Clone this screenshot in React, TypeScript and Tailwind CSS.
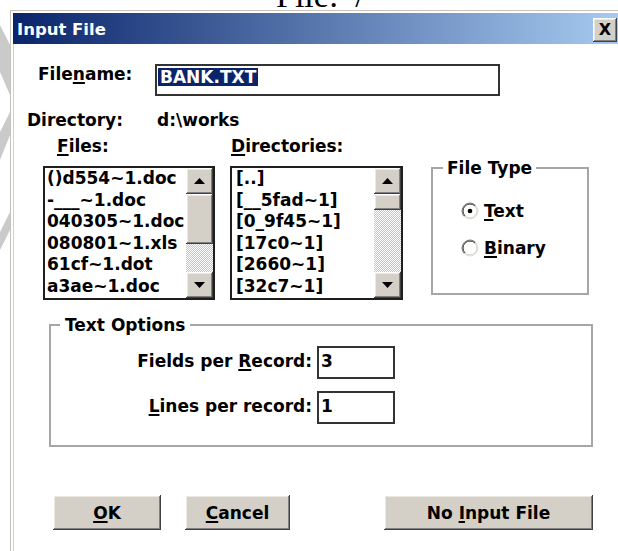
import React from 'react';

// classic raised 3D face used by buttons, scroll arrows and thumbs
const raised =
  'bg-[#d4d0c8] shadow-[inset_-1px_-1px_#404040,inset_1px_1px_#ffffff,inset_-2px_-2px_#808080,inset_2px_2px_#ece9e2]';

const files = ['()d554~1.doc', '-___~1.doc', '040305~1.doc', '080801~1.xls', '61cf~1.dot', 'a3ae~1.doc'];
const dirs = ['[..]', '[__5fad~1]', '[0_9f45~1]', '[17c0~1]', '[2660~1]', '[32c7~1]'];

function Arrow({ up }: { up?: boolean }) {
  return (
    <svg width="11" height="6" viewBox="0 0 11 6">
      <polygon points={up ? '0,6 5.5,0 11,6' : '0,0 5.5,6 11,0'} fill="#000" />
    </svg>
  );
}

function ScrollBar({ thumb }: { thumb: string }) {
  return (
    <div className="flex w-[27px] shrink-0 flex-col">
      <div className={`flex h-[26px] items-center justify-center ${raised}`}>
        <Arrow up />
      </div>
      <div className={`${thumb} ${raised}`} />
      <div className="flex-1 bg-[repeating-conic-gradient(#c8c5bd_0_25%,#ffffff_0_50%)] bg-[length:2px_2px]" />
      <div className={`flex h-[26px] items-center justify-center ${raised}`}>
        <Arrow />
      </div>
    </div>
  );
}

function ListBox({
  items,
  width,
  pad,
  thumb,
}: {
  items: string[];
  width: string;
  pad: string;
  thumb: string;
}) {
  return (
    <div className={`flex h-[134px] ${width} shrink-0 border-2 border-[#1e1e1e] bg-white`}>
      <ul className={`flex-1 overflow-hidden ${pad} whitespace-pre text-[17px] leading-[21.6px]`}>
        {items.map((item) => (
          <li key={item}>{item}</li>
        ))}
      </ul>
      <ScrollBar thumb={thumb} />
    </div>
  );
}

function Radio({ checked }: { checked?: boolean }) {
  return (
    <svg width="18" height="18" viewBox="0 0 18 18" className="shrink-0">
      <circle cx="9" cy="9" r="7" fill="#fff" />
      <path d="M3.34 14.66A8 8 0 0 1 14.66 3.34" stroke="#808080" fill="none" />
      <path d="M14.66 3.34A8 8 0 0 1 3.34 14.66" stroke="#e4e2dc" fill="none" />
      <path d="M4.05 13.95A7 7 0 0 1 13.95 4.05" stroke="#303030" fill="none" />
      <path d="M13.95 4.05A7 7 0 0 1 4.05 13.95" stroke="#cfccc4" fill="none" />
      {checked && <circle cx="9" cy="9" r="2.3" fill="#000" />}
    </svg>
  );
}

function U({ children }: { children: React.ReactNode }) {
  return <span className="underline decoration-2 underline-offset-2">{children}</span>;
}

export default function App() {
  return (
    <div className="flex h-[551px] w-[618px] flex-col overflow-hidden bg-white font-['DejaVu_Sans',sans-serif] font-bold text-black">
      {/* heading of the page above the dialog, mostly cut off */}
      <div className="h-[10px] shrink-0 overflow-hidden">
        <div className="-mt-[21px] ml-[276px] whitespace-pre font-['Liberation_Serif',serif] text-[34px] font-normal leading-[34px]">
          File:  /
        </div>
      </div>

      <div className="flex flex-1">
        {/* watermark strokes in the left margin */}
        <svg width="10" height="541" className="shrink-0">
          <polygon points="0,15 10,35 10,85 0,62" fill="#cacaca" />
          <polygon points="10,102 10,125 0,150 0,122" fill="#cacaca" />
          <polygon points="10,202 10,220 0,240 0,222" fill="#cacaca" />
        </svg>

        <div className="flex flex-1 flex-col border-l border-t border-[#c8c4bc] pl-[2px] pt-[2px]">
          {/* title bar */}
          <div className="flex h-[31px] shrink-0 items-start bg-[linear-gradient(to_right,#0a246a,#a6caf0)]">
            <span className="pl-[4px] pt-[7px] text-[16.5px] leading-[20px] text-white">Input File</span>
            <div
              className={`ml-auto mr-[1px] mt-[5px] flex h-[24px] w-[24px] items-center justify-center text-[16px] leading-none ${raised}`}
            >
              X
            </div>
          </div>

          <div className="flex flex-1 flex-col border-l border-[#d4d0c8] text-[17px] leading-[20px]">
            {/* filename */}
            <div className="mt-[20px] flex items-start">
              <div className="ml-[24px] w-[117px]">
                File<U>n</U>ame:
              </div>
              <div className="h-[32px] w-[345px] border-2 border-[#333]">
                <span className="ml-[1px] mt-[2px] inline-block bg-[#0a246a] px-[2px] leading-[18px] text-white">
                  BANK.TXT
                </span>
              </div>
            </div>

            {/* current directory */}
            <div className="mt-[14px] flex">
              <div className="ml-[13px] w-[130px]">Directory:</div>
              <div>d:\works</div>
            </div>

            <div className="mt-[6px] flex">
              <div className="ml-[43px] w-[174px]">
                <U>F</U>iles:
              </div>
              <div>
                <U>D</U>irectories:
              </div>
            </div>

            {/* lists and file type */}
            <div className="mt-[10px] flex items-start">
              <div className="ml-[29px]">
                <ListBox items={files} width="w-[172px]" pad="pl-[2px]" thumb="h-[50px]" />
              </div>
              <div className="ml-[15px]">
                <ListBox items={dirs} width="w-[173px]" pad="pl-[4px]" thumb="h-[16px]" />
              </div>
              <div className="relative ml-[28px] mt-[1px] h-[128px] w-[158px] border-2 border-[#a6a6a6]">
                <span className="absolute left-[10px] top-[-11px] bg-white px-[4px]">File Type</span>
                <div className="ml-[28px] mt-[32px] flex h-[20px] items-center gap-[5px]">
                  <Radio checked />
                  <span>
                    <U>T</U>ext
                  </span>
                </div>
                <div className="ml-[28px] mt-[17px] flex h-[20px] items-center gap-[5px]">
                  <Radio />
                  <span>
                    <U>B</U>inary
                  </span>
                </div>
              </div>
            </div>

            {/* text options */}
            <div className="relative ml-[35px] mt-[24px] h-[123px] w-[544px] border-2 border-[#a6a6a6]">
              <span className="absolute left-[9px] top-[-11px] bg-white px-[5px]">Text Options</span>
              <div className="mt-[20px] flex items-start">
                <div className="mt-[5px] w-[261px] text-right">
                  Fields per <U>R</U>ecord:
                </div>
                <div className="ml-[5px] h-[33px] w-[78px] border-2 border-[#333] pl-[2px] pt-[3px]">3</div>
              </div>
              <div className="mt-[12px] flex items-start">
                <div className="mt-[5px] w-[261px] text-right">
                  <U>L</U>ines per record:
                </div>
                <div className="ml-[5px] h-[33px] w-[78px] border-2 border-[#333] pl-[2px] pt-[3px]">1</div>
              </div>
            </div>

            {/* dialog buttons */}
            <div className="ml-[39px] mt-[48px] flex">
              <button className={`h-[35px] w-[108px] ${raised}`}>
                <U>O</U>K
              </button>
              <button className={`ml-[24px] h-[35px] w-[105px] ${raised}`}>
                <U>C</U>ancel
              </button>
              <button className={`ml-[94px] h-[35px] w-[209px] ${raised}`}>
                No <U>I</U>nput File
              </button>
            </div>
          </div>
        </div>
      </div>
    </div>
  );
}
